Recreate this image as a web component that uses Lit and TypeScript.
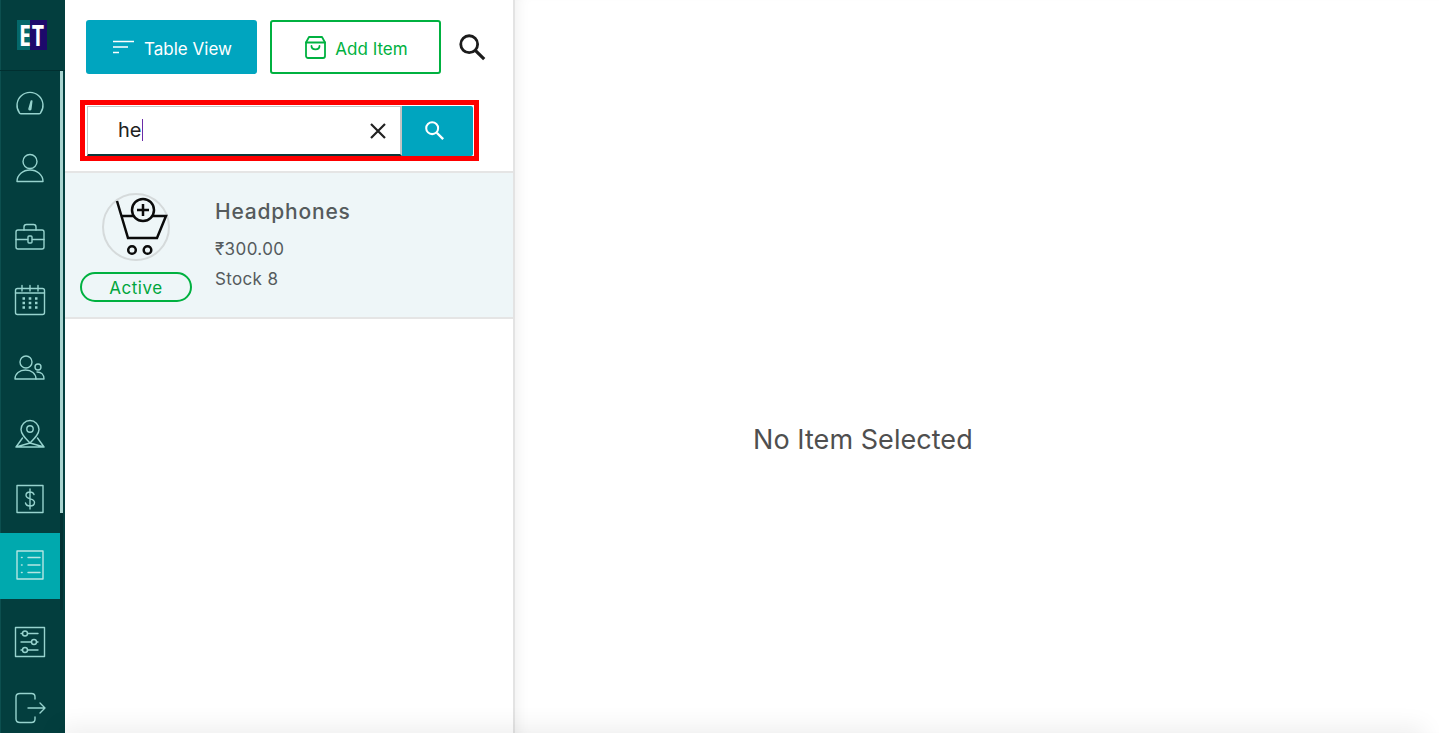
import { LitElement, html, css, svg } from "lit";
import { customElement } from "lit/decorators.js";

const icons = [
  svg`<path d="M9.500 30a13 13 0 1 1 21 0c-.4.500-1 .800-1.500.800H11c-.6 0-1.100-.300-1.500-.800z"/><path d="M19 26c.2 1 1.600 1 1.800 0l1-8h-.5z" stroke-width="1.500"/>`,
  svg`<circle cx="20" cy="12.500" r="7"/><path d="M7 32.500c0-6.500 6-11.500 13-11.500s13 5 13 11.500z"/>`,
  svg`<rect x="6" y="15" width="28" height="19" rx="2"/><path d="M14 15v-3c0-1.500 1-2.500 2.500-2.500h7c1.500 0 2.500 1 2.500 2.500v3M6 24.500h11.500M22.500 24.500H34"/><rect x="18" y="21" width="4" height="7" rx="1"/>`,
  svg`<rect x="5.500" y="7.500" width="29" height="26" rx="2"/><path d="M5.500 12h29M12 4.500V10M20 4.500V10M28 4.500V10"/><path d="M12.500 17.500H15M18.700 17.500h2.600M25 17.500h2.500M12.500 22H15M18.700 22h2.600M25 22h2.500M12.500 26.500H15M18.700 26.500h2.600M25 26.500h2.500" stroke-width="2.400" stroke-linecap="butt"/>`,
  svg`<circle cx="16" cy="15" r="6"/><path d="M5 32c0-5.500 4.500-9 10.500-9S26 26.500 26 32z"/><circle cx="28" cy="20" r="3"/><path d="M27 25c4 0 7 2.500 7 7h-8"/>`,
  svg`<path d="M20 30c-5-5-9-9-9-13.500a9 9 0 0 1 18 0c0 4.500-4 8.500-9 13.500z"/><circle cx="20" cy="16" r="3.200"/><path d="M12.500 25 6 34h28l-6.500-9M6 34l14-4 14 4"/>`,
  svg`<rect x="7" y="6.500" width="26" height="27"/><path d="M24 15.500c-.5-1.500-2-2.500-4-2.500-2.300 0-4 1.300-4 3.300 0 4.700 8.500 2.500 8.500 7.200 0 2.200-1.900 3.500-4.500 3.500-2.300 0-4-1-4.500-3M20 10v20"/>`,
  svg`<rect x="7" y="6" width="26" height="28"/><path d="M18 12.500h12M18 20h12M18 27.500h12"/><path d="M11.500 12.500h.6M11.500 20h.6M11.500 27.500h.6" stroke-width="1.500"/>`,
];
const footIcons = [
  svg`<rect x="5.500" y="5.500" width="29" height="29"/><path d="M11 11.500h1.500M17.500 11.500H28M11 20h10.500M26.500 20H28M11 28h1.500M17.500 28H28"/><circle cx="15" cy="11.500" r="2.500"/><circle cx="24" cy="20" r="2.500"/><circle cx="15" cy="28" r="2.500"/>`,
  svg`<path d="M25 11V9c0-2-1.500-3.500-3.500-3.500H10C7.500 5.500 6 7 6 9v22c0 2 1.500 3.500 4 3.500h11.500c2 0 3.500-1.500 3.500-3.500v-2"/><path d="M18 20h17M30 15l5 5-5 5"/>`,
];

@customElement("app-root")
export class AppRoot extends LitElement {
  static styles = css`
    :host {
      display: flex;
      position: relative;
      width: 100%;
      height: 733px;
      overflow: hidden;
      background: #fff;
      font-family: Inter, "Noto Sans", sans-serif;
    }
    .side {
      flex: 0 0 65px;
      height: 733px;
      background: #033e3e;
      box-shadow: inset 1px 0 #0c4f4f;
      overflow: hidden;
    }
    .logo-wrap {
      height: 70px;
      border-bottom: 1px solid #012f30;
      display: flex;
      align-items: center;
      padding-left: 17px;
    }
    .logo {
      width: 30px;
      height: 30px;
      display: flex;
      align-items: center;
      justify-content: center;
      background: linear-gradient(90deg, #04686a 0 44%, #1d0a6b 44% 100%);
      color: #fff;
      font: 700 28px/30px "Open Sans", sans-serif;
    }
    .logo span {
      display: block;
      transform: scaleX(0.76);
      letter-spacing: 1px;
      white-space: nowrap;
    }
    .nav {
      display: flex;
      height: 539px;
    }
    .items {
      width: 60px;
    }
    .item {
      height: 66px;
      display: flex;
      align-items: center;
      justify-content: center;
    }
    .item.active {
      background: #00a9ae;
    }
    .item svg {
      width: 40px;
      height: 40px;
      margin-top: -2px;
      fill: none;
      stroke: #97d3ce;
      stroke-width: 1.400;
      stroke-linecap: round;
      stroke-linejoin: round;
    }
    .item.active svg {
      stroke: #b5e6e3;
    }
    .track {
      width: 3px;
      background: #023233;
    }
    .thumb {
      width: 3px;
      height: 442px;
      background: #a9d4d0;
    }
    .foot .item {
      width: 60px;
    }
    .panel {
      flex: 0 0 448px;
      height: 733px;
      border-right: 2px solid #e3e3e3;
      background: #fff;
      position: relative;
      z-index: 1;
    }
    .actions {
      display: flex;
      align-items: center;
      padding: 20px 0 0 21px;
      height: 54px;
    }
    .btn {
      width: 171px;
      height: 54px;
      box-sizing: border-box;
      border-radius: 3px;
      display: flex;
      align-items: center;
      justify-content: center;
      font-size: 17px;
    }
    .btn.primary {
      background: #00a5bf;
      color: #fff;
      gap: 10px;
      padding-left: 2px;
    }
    .btn.primary .label {
      padding-top: 4px;
    }
    .btn.outline {
      margin-left: 13px;
      border: 2px solid #00b140;
      color: #00b140;
      gap: 9px;
      padding-left: 2px;
    }
    .btn.outline .label {
      padding-top: 4px;
    }
    .glass {
      margin-left: 16px;
      width: 30px;
      height: 30px;
    }
    .search {
      width: 399px;
      height: 61px;
      box-sizing: border-box;
      margin: 26px 0 10px 15px;
      border: 5px solid #fe0000;
      display: flex;
      padding: 1px 1px 0 2px;
    }
    .field {
      width: 315px;
      height: 50px;
      box-sizing: border-box;
      border: 1px solid #c4c4c4;
      border-right-width: 2px;
      border-bottom: 2px solid #0a3a3c;
      display: flex;
      align-items: center;
      padding: 0 12px 0 30px;
      font-size: 20px;
      color: #222;
    }
    .typed {
      flex: 1;
      display: flex;
      align-items: center;
      line-height: 22px;
      padding-bottom: 2px;
    }
    .caret {
      width: 1px;
      height: 22px;
      background: #6a2ca8;
    }
    .go {
      width: 71px;
      height: 50px;
      box-sizing: border-box;
      padding: 0 8px 3px 0;
      background: #00a5bf;
      border-radius: 0 2px 2px 0;
      display: flex;
      align-items: center;
      justify-content: center;
    }
    .row {
      height: 148px;
      box-sizing: border-box;
      background: #eef6f8;
      border-top: 2px solid #e5e5e5;
      border-bottom: 2px solid #e5e5e5;
      display: flex;
      padding-left: 15px;
    }
    .left {
      width: 112px;
      display: flex;
      flex-direction: column;
      align-items: center;
      padding-top: 20px;
    }
    .thumbimg {
      width: 68px;
      height: 68px;
      box-sizing: border-box;
      border-radius: 50%;
      border: 2px solid #d5dadb;
    }
    .thumbimg svg {
      display: block;
      margin: -2px;
    }
    .badge {
      margin-top: 11px;
      width: 112px;
      height: 30px;
      box-sizing: border-box;
      border: 2px solid #00b140;
      border-radius: 15px;
      color: #00a63c;
      font-size: 17px;
      line-height: 28px;
      text-align: center;
      letter-spacing: 0.5px;
    }
    .info {
      margin-left: 23px;
      color: #555b5d;
    }
    .name {
      margin-top: 26px;
      font-size: 21px;
      line-height: 26px;
      font-weight: 500;
      letter-spacing: 0.8px;
    }
    .price {
      margin-top: 12px;
      font-size: 17px;
      line-height: 24px;
      letter-spacing: 0.4px;
    }
    .stock {
      margin-top: 6px;
      font-size: 17px;
      line-height: 24px;
      letter-spacing: 0.35px;
    }
    .main {
      flex: 1;
      height: 733px;
      box-sizing: border-box;
      padding: 423px 0 0 238px;
      box-shadow: inset 12px 0 14px -10px rgba(0, 0, 0, 0.07);
    }
    .empty {
      font-size: 27px;
      line-height: 34px;
      color: #4f4f4f;
      letter-spacing: 0.05px;
    }
    .shade {
      position: absolute;
      left: 65px;
      right: 20px;
      bottom: -14px;
      height: 14px;
      z-index: 2;
      box-shadow: 0 0 24px 6px rgba(0, 0, 0, 0.07);
    }
  `;

  render() {
    return html`
      <aside class="side">
        <div class="logo-wrap"><div class="logo"><span>ET</span></div></div>
        <div class="nav">
          <div class="items">
            ${icons.map(
              (ic, i) => html`<div class="item ${i === 7 ? "active" : ""}"><svg viewBox="0 0 40 40">${ic}</svg></div>`
            )}
          </div>
          <div class="track"><div class="thumb"></div></div>
        </div>
        <div class="foot">
          ${footIcons.map((ic) => html`<div class="item"><svg viewBox="0 0 40 40">${ic}</svg></div>`)}
        </div>
      </aside>
      <section class="panel">
        <div class="actions">
          <div class="btn primary">
            <svg width="21" height="14" viewBox="0 0 21 14" fill="none" stroke="#fff" stroke-width="1.700">
              <path d="M0 1.500h21M0 7h15M0 12.500h6" />
            </svg>
            <span class="label">Table View</span>
          </div>
          <div class="btn outline">
            <svg width="21" height="23" viewBox="0 0 21 23" fill="none" stroke="#00b140" stroke-width="1.800" stroke-linejoin="round" stroke-linecap="round">
              <path d="M4 1h13l3 5.500V20a2 2 0 0 1-2 2H3a2 2 0 0 1-2-2V6.500z" />
              <path d="M1 6.500h19M6.500 10c0 4.500 8 4.500 8 0" />
            </svg>
            <span class="label">Add Item</span>
          </div>
          <svg class="glass" viewBox="0 0 32 32" fill="none" stroke="#1b1b1b" stroke-width="3">
            <circle cx="13" cy="13" r="9" />
            <path d="M19.500 19.500 29 29" stroke-width="3.400" />
          </svg>
        </div>
        <div class="search">
          <div class="field">
            <div class="typed">he<span class="caret"></span></div>
            <svg width="20" height="20" viewBox="0 0 20 20" stroke="#222" stroke-width="2.200" fill="none">
              <path d="M3 3l14 14M17 3 3 17" />
            </svg>
          </div>
          <div class="go">
            <svg width="22" height="22" viewBox="0 0 24 24" fill="none" stroke="#fff" stroke-width="2.200">
              <circle cx="10" cy="10" r="6.500" />
              <path d="M15 15l7 7" stroke-width="2.600" />
            </svg>
          </div>
        </div>
        <div class="row">
          <div class="left">
            <div class="thumbimg">
              <svg width="68" height="68" viewBox="0 0 68 68" fill="none" stroke="#0b0b0b" stroke-width="2.500">
                <path d="M15 8l11 37h29l9-22H20" />
                <circle cx="41" cy="17" r="11" fill="#eef6f8" />
                <path d="M41 11v12M35 17h12" />
                <circle cx="30" cy="57" r="3.800" />
                <circle cx="45.500" cy="57" r="3.800" />
              </svg>
            </div>
            <div class="badge">Active</div>
          </div>
          <div class="info">
            <div class="name">Headphones</div>
            <div class="price">₹300.00</div>
            <div class="stock">Stock 8</div>
          </div>
        </div>
      </section>
      <main class="main"><div class="empty">No Item Selected</div></main>
      <div class="shade"></div>
    `;
  }
}
